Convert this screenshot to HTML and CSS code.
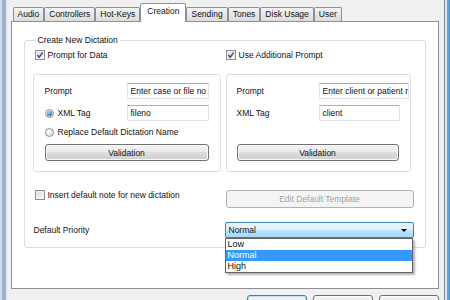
FILE: index.html
```html
<!DOCTYPE html>
<html lang="en">
<head>
  <meta charset="UTF-8" />
  <title>Options - Creation</title>
  <link rel="stylesheet" href="styles.css">
</head>
<body>

  <div class="window">
    <div class="frame-left"></div>

    <div class="dialog">
      <div class="tabs">
        <div class="tab">Audio</div>
        <div class="tab">Controllers</div>
        <div class="tab">Hot-Keys</div>
        <div class="tab active">Creation</div>
        <div class="tab">Sending</div>
        <div class="tab">Tones</div>
        <div class="tab">Disk Usage</div>
        <div class="tab">User</div>
      </div>

      <div class="panel">
        <div class="group">
          <span class="group-title">Create New Dictation</span>

          <div class="group-grid">
            <label class="check first">
              <span class="cb"><svg viewBox="0 0 8 8"><path d="M1.3 4.1 L3.1 6.2 L6.8 1.4" /></svg></span>
              Prompt for Data
            </label>
            <label class="check">
              <span class="cb"><svg viewBox="0 0 8 8"><path d="M1.3 4.1 L3.1 6.2 L6.8 1.4" /></svg></span>
              Use Additional Prompt
            </label>

            <div class="sub sub-left">
              <span class="lbl">Prompt</span>
              <div class="input">Enter case or file no</div>

              <label class="radio-row row-xml"><span class="radio on"></span>XML Tag</label>
              <div class="input row-xml">fileno</div>

              <label class="radio-row row-wide"><span class="radio"></span>Replace Default Dictation Name</label>

              <div class="btn row-btn">Validation</div>
            </div>

            <div class="sub sub-right">
              <span class="lbl">Prompt</span>
              <div class="input wide">Enter client or patient name</div>

              <span class="lbl row-xml">XML Tag</span>
              <div class="input row-xml">client</div>

              <div class="btn row-btn">Validation</div>
            </div>

            <label class="check first row-note">
              <span class="cb"></span>
              Insert default note for new dictation
            </label>
            <div class="btn disabled row-note">Edit Default Template</div>

            <span class="lbl priority">Default Priority</span>
            <div class="combo-wrap">
              <div class="combo">
                <span>Normal</span>
                <span class="arrow"></span>
              </div>
              <ul class="list">
                <li>Low</li>
                <li class="selected">Normal</li>
                <li>High</li>
              </ul>
            </div>
          </div>
        </div>
      </div>

      <div class="buttons">
        <div class="btn big default">OK</div>
        <div class="btn big">Cancel</div>
        <div class="btn big">Help</div>
      </div>
    </div>

    <div class="frame-right"></div>
  </div>

</body>
</html>
```

FILE: styles.css
```css
* {
  box-sizing: border-box;
}

body {
  margin: 0;
  width: 450px;
  height: 300px;
  overflow: hidden;
  background: #f0f0f0;
  font-family: "Liberation Sans", Arial, sans-serif;
  font-size: 8.5px;
  color: #111;
}

.window {
  display: flex;
  height: 300px;
}

/* aero frame edges */
.frame-left {
  width: 7px;
  background: linear-gradient(to right, #d3dbe6 0 2px, #9fb3cf 2px 6px, #e2e6ec 6px);
}

.frame-right {
  width: 7px;
  background: linear-gradient(to right, #7d8896 0 1px, #dfe9f2 1px 3px, #6aa2cc 3px 5px, #4f8fc2 5px);
}

.dialog {
  flex: 1;
  padding: 3px 5px 0 4px;
}

/* tabs */
.tabs {
  display: flex;
  align-items: flex-end;
  height: 19px;
  padding-left: 2px;
  position: relative;
  z-index: 2;
}

.tab {
  height: 14px;
  margin-bottom: 1px;
  padding: 0 4px;
  line-height: 13px;
  border: 1px solid #8c8f97;
  border-bottom: none;
  border-radius: 2px 2px 0 0;
  background: linear-gradient(#f4f4f4, #e8e8e8 50%, #dcdcdc);
  white-space: nowrap;
}

.tab.active {
  height: 19px;
  margin-bottom: 0;
  padding: 0 6px;
  line-height: 15px;
  background: #fff;
}

.panel {
  height: 268px;
  margin-top: -1px;
  padding: 0 12px;
  border: 1px solid #8c8f97;
  background: #fff;
}

/* group box */
.group {
  margin-top: 18px;
  height: 208px;
  padding: 0 11px 0 8px;
  border: 1px solid #d5dfe5;
  border-radius: 3px;
}

.group-title {
  display: block;
  width: fit-content;
  margin: -6px 0 0 3px;
  padding: 0 2px;
  line-height: 11px;
  background: #fff;
}

.group-grid {
  display: grid;
  grid-template-columns: 188px 188px;
  column-gap: 5px;
  margin-top: 4px;
}

.check {
  display: flex;
  align-items: center;
  gap: 3px;
  height: 10px;
  white-space: nowrap;
}

.check.first {
  padding-left: 2px;
}

.cb {
  display: flex;
  align-items: center;
  justify-content: center;
  width: 10px;
  height: 10px;
  border: 1px solid #8e8f8f;
  background: linear-gradient(135deg, #dcdcdc, #f7f7f7);
  box-shadow: inset 0 0 0 1px #f4f4f4;
}

.cb svg {
  width: 8px;
  height: 8px;
}

.cb path {
  fill: none;
  stroke: #3d5088;
  stroke-width: 1.5;
}

/* inner boxes */
.sub {
  display: grid;
  grid-template-columns: 82px 82px;
  align-content: start;
  align-items: center;
  height: 98px;
  margin-top: 14px;
  padding: 8px 10px 0 11px;
  border: 1px solid #dcdfe3;
  border-radius: 3px;
}

.sub .row-xml {
  margin-top: 6px;
}

.sub-left .row-wide {
  grid-column: 1 / 3;
  height: 16px;
  margin-top: 3px;
}

.sub-left .row-btn {
  grid-column: 1 / 3;
  margin-top: 4px;
}

.sub-right {
  width: 185px;
  grid-template-columns: 82px 90px;
  padding-left: 10px;
}

.sub-right .input.row-xml {
  width: 81px;
}

.sub-right .row-btn {
  grid-column: 1 / 3;
  width: 162px;
  margin-top: 23px;
}

.lbl {
  white-space: nowrap;
}

.input {
  height: 16px;
  padding-left: 3px;
  line-height: 14px;
  border: 1px solid #dfe2e8;
  border-top-color: #abadb3;
  background: #fff;
  white-space: nowrap;
  overflow: hidden;
}

.radio-row {
  display: flex;
  align-items: center;
  gap: 4px;
  height: 16px;
  white-space: nowrap;
}

.radio {
  display: flex;
  align-items: center;
  justify-content: center;
  width: 9px;
  height: 9px;
  border: 1px solid #8e8f8f;
  border-radius: 50%;
  background: radial-gradient(circle at 35% 35%, #fff, #d2d2d2);
}

.radio.on::after {
  content: "";
  width: 5px;
  height: 5px;
  border-radius: 50%;
  background: radial-gradient(circle at 40% 35%, #a6dbfa, #2a66a8 70%);
}

/* buttons */
.btn {
  display: flex;
  align-items: center;
  justify-content: center;
  height: 17px;
  border: 1px solid #707070;
  border-radius: 3px;
  background: linear-gradient(#f2f2f2, #ebebeb 50%, #dddddd 50%, #cfcfcf);
  box-shadow: inset 0 0 0 1px #fcfcfc;
  white-space: nowrap;
}

.btn.disabled {
  border-color: #adb2b5;
  background: #f4f4f4;
  box-shadow: none;
  color: #a3a3a3;
}

.row-note {
  margin-top: 18px;
}

.btn.row-note {
  height: 18px;
}

.priority {
  margin-top: 14px;
  padding-left: 1px;
  line-height: 16px;
}

/* combo box, open */
.combo-wrap {
  position: relative;
  margin: 14px 0 0 -1px;
}

.combo {
  display: flex;
  align-items: center;
  justify-content: space-between;
  height: 16px;
  padding: 0 6px 0 3px;
  border: 1px solid #3c7fb1;
  border-radius: 2px;
  background: linear-gradient(#eaf6fd, #d9f0fc 50%, #bee6fd 50%, #a7d9f5);
}

.arrow {
  width: 0;
  height: 0;
  border-left: 3px solid transparent;
  border-right: 3px solid transparent;
  border-top: 3px solid #000;
}

.list {
  position: absolute;
  top: 16px;
  left: 0;
  width: 188px;
  margin: 0;
  padding: 0;
  list-style: none;
  border: 1px solid #646464;
  background: #fff;
  box-shadow: 2px 2px 2px rgba(0, 0, 0, 0.3);
  z-index: 3;
}

.list li {
  height: 11px;
  padding-left: 2px;
  line-height: 11px;
  font-size: 9px;
}

.list li.selected {
  background: #3399ff;
  color: #fff;
}

.buttons {
  display: flex;
  justify-content: flex-end;
  gap: 6px;
  margin-top: 6px;
}

.btn.big {
  width: 60px;
  height: 21px;
}

.btn.default {
  border-color: #3c7fb1;
  box-shadow: inset 0 0 0 1px #b6e3fb;
}
```
